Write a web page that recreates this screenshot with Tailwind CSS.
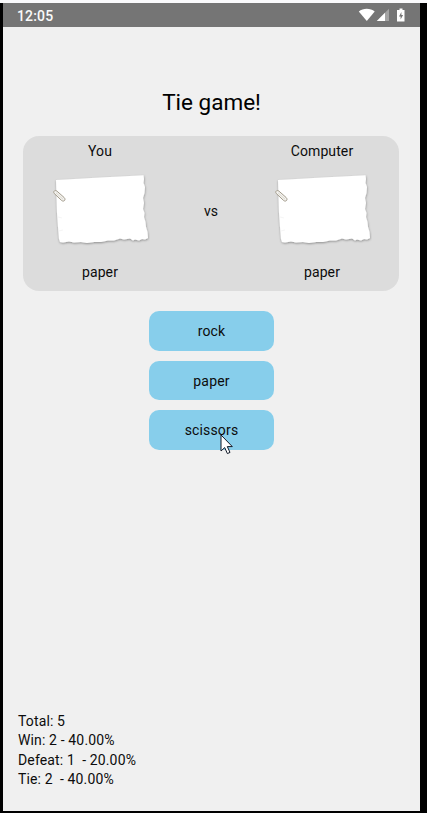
<!DOCTYPE html>
<html lang="en">
<head>
<meta charset="utf-8">
<title>Rock Paper Scissors</title>
<script src="https://cdn.jsdelivr.net/npm/@tailwindcss/browser@4"></script>
</head>
<body class="w-[427px] h-[813px] overflow-hidden bg-black border-t-3 border-[#fafafc] font-[Roboto,sans-serif] text-[14px] leading-[19px] text-[#0c0c0c]">
<svg class="absolute w-0 h-0">
  <defs>
    <filter id="shadow" x="-10%" y="-10%" width="120%" height="130%"><feDropShadow dx="0.3" dy="1" stdDeviation="0.9" flood-color="#000" flood-opacity="0.36"/></filter>
    <symbol id="note" viewBox="0 0 100 74">
      <path filter="url(#shadow)" fill="#fff" d="M6 7 L20 6.200 50 4.500 75 3.200 93.500 2.200 94 6 93.500 10 95 14 94.500 20 93 25 94 30 93 36 94.500 40 94 44 95.500 49 96 54 97.500 59 98 65 95 66.500 92 66 89 67.500 85 66.500 83 67.500 80 65.500 74 66.500 70 65.500 64 67.500 58 67.500 51 69 44 69 37 70 31 69 24 69.500 19 68.500 13 69.500 10 69 9 66 8 54 7 40Z"/>
      <path d="M8 44l4 1M9 58l4-1" stroke="#eee" stroke-width=".6" fill="none"/>
      <path d="M4.300 20.500C2.500 18.500 5.300 16.500 7 18.200L14 24.400C16.500 26.700 13.800 29.500 11.400 27.300L4.300 20.500" stroke="#a39c8c" stroke-width="1" fill="#f3f2ef"/>
      <path d="M6 19.800l7 6.400" stroke="#d2cdbf" stroke-width=".7" fill="none"/>
    </symbol>
  </defs>
</svg>
<div class="ml-[3px] w-[417px] h-[808px] bg-[#f0f0f0] flex flex-col">
  <header class="h-6 bg-[#757575] flex items-center justify-between pl-[14px] pr-[14px] text-[#fafafa] font-medium text-[14px] tracking-[0.15px] shrink-0">
    <span class="pt-[2px]">12:05</span>
    <svg width="48" height="14" viewBox="0 0 48 14">
      <path fill="#fff" d="M.800 3.600C5-.200 12.500-.200 16.700 3.600L8.800 13Z"/>
      <path fill="#a3a3a3" d="M31 .800V13H18.800Z"/>
      <path fill="#fff" d="M27 4.800V13H18.800Z"/>
      <path fill="#fff" d="M41.500.500h3V2h2v11.500h-7.500V2h2.500Z"/>
      <path fill="#757575" d="M43.400 4l-2.400 4.400h1.600v3.200l2.500-4.500h-1.700Z"/>
    </svg>
  </header>
  <h1 class="mt-[59px] h-8 leading-8 text-center text-[22.500px] text-black shrink-0">Tie game!</h1>
  <section class="mt-[18px] mx-5 w-[376px] h-[155px] rounded-[16px] bg-[#dcdcdc] flex items-center justify-between px-[27px] tracking-[0.1px] shrink-0">
    <div class="w-[100px] h-full flex flex-col items-center pt-[6px]">
      <span>You</span>
      <svg class="mt-[12px] mb-[16px] w-[100px] h-[74px] shrink-0"><use href="#note"/></svg>
      <span>paper</span>
    </div>
    <span class="pb-[4px]">vs</span>
    <div class="w-[100px] h-full flex flex-col items-center pt-[6px]">
      <span>Computer</span>
      <svg class="mt-[12px] mb-[16px] w-[100px] h-[74px] shrink-0"><use href="#note"/></svg>
      <span>paper</span>
    </div>
  </section>
  <div class="mt-5 flex flex-col items-center gap-[10px]">
    <button class="w-[125px] h-[39.500px] pt-[2px] rounded-[10px] bg-[#87ceeb] tracking-[0.15px]">rock</button>
    <button class="w-[125px] h-[39.500px] pt-[2px] rounded-[10px] bg-[#87ceeb] tracking-[0.15px]">paper</button>
    <button class="relative w-[125px] h-[39.500px] pt-[2px] rounded-[10px] bg-[#87ceeb] tracking-[0.15px]">scissors
      <svg class="absolute left-[71px] top-[24px]" width="13" height="21" viewBox="0 0 13 21"><path d="M1 1V17L4.700 13.600 7.400 19.600 10 18.400 7.300 12.600H12.300Z" fill="#fff" stroke="#111827" stroke-width="1"/></svg>
    </button>
  </div>
  <footer class="mt-auto pl-[15px] pb-[22px] leading-[19.200px] tracking-[0.14px] whitespace-pre"><p>Total: 5</p><p>Win: 2 - 40.00%</p><p>Defeat: 1  - 20.00%</p><p>Tie: 2  - 40.00%</p></footer>
</div>
</body>
</html>
